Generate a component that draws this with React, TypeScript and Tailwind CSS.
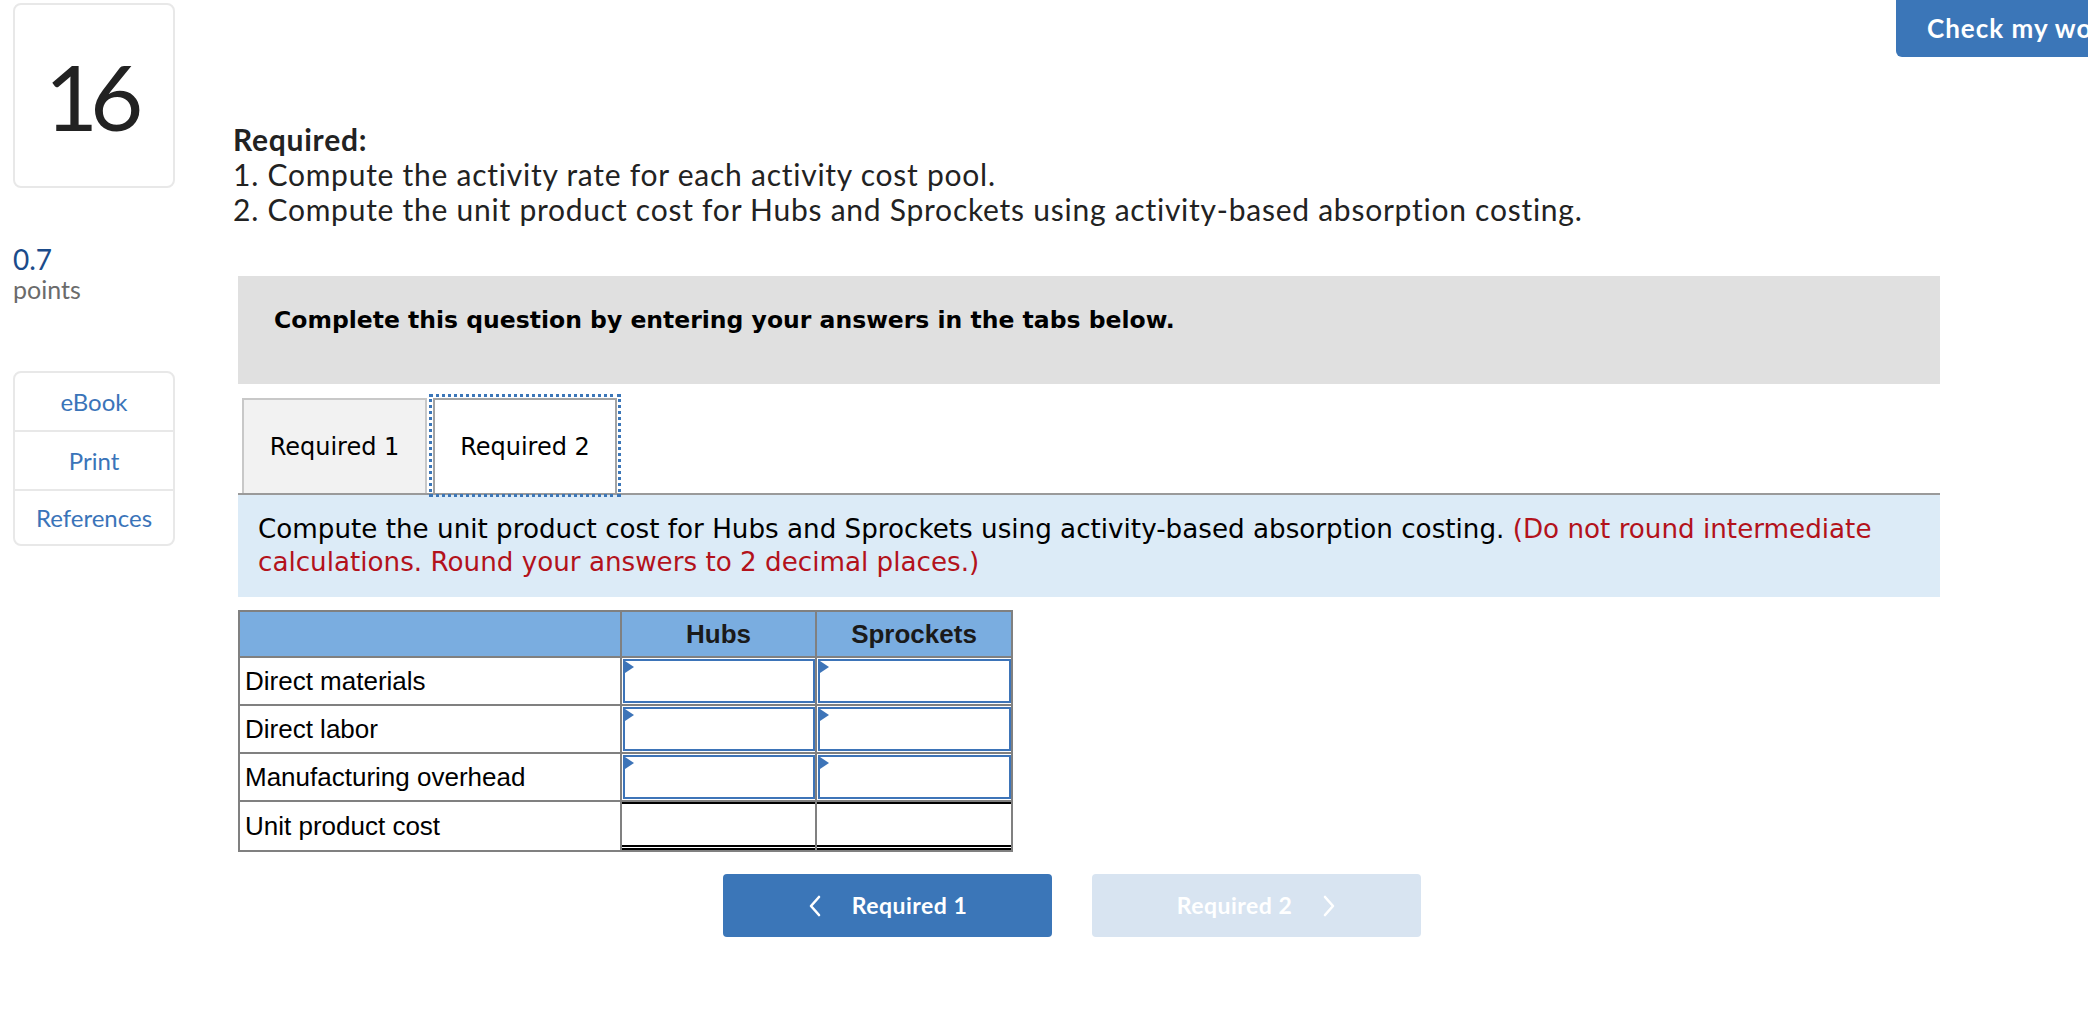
import React from "react";

const proxima = "font-['Lato',_'Liberation_Sans',_sans-serif]";
const verdana = "font-['DejaVu_Sans',_'Liberation_Sans',_sans-serif]";
const arial = "font-['Liberation_Sans',_Arial,_sans-serif]";

function Chevron({ dir }: { dir: "left" | "right" }) {
  return (
    <svg width="14" height="24" viewBox="0 0 14 24" fill="none">
      <polyline
        points={dir === "left" ? "11,3 3,12 11,21" : "3,3 11,12 3,21"}
        stroke="white"
        strokeWidth="2.6"
        strokeLinecap="round"
        strokeLinejoin="round"
      />
    </svg>
  );
}

function InputCell() {
  return (
    <div className="bg-white p-[1px] pr-0">
      <div className="relative h-full border-2 border-[#3d74b8] bg-white">
        <span className="absolute left-0 top-0 h-0 w-0 border-y-[6px] border-l-[9px] border-y-transparent border-l-[#3d74b8]" />
      </div>
    </div>
  );
}

const rows = ["Direct materials", "Direct labor", "Manufacturing overhead"];

export default function App() {
  return (
    <div className="relative h-[1018px] w-[2088px] overflow-hidden bg-white text-black">
      {/* check my work, cut off at the right edge */}
      <button
        className={`${proxima} absolute right-[-80px] top-0 h-[57px] w-[272px] rounded-b-[6px] bg-[#3b76b8] pl-[31px] text-left text-[26px] font-bold tracking-[1px] text-white`}
      >
        Check my work
      </button>

      <div className="flex">
        {/* sidebar */}
        <div className={`${proxima} ml-[13px] w-[162px] flex-none`}>
          <div className="mt-[3px] flex h-[185px] items-center justify-center rounded-[8px] border-2 border-[#e8e8e8] text-[92px] leading-none tracking-[-8px] text-[#222]">
            <span className="mr-[8px]">16</span>
          </div>
          <div className="mt-[56px] text-[28px] leading-[30px] text-[#1b4b8a]">0.7</div>
          <div className="text-[25px] leading-[30px] text-[#6b6b6b]">points</div>
          <div className="mt-[67px] rounded-[8px] border-2 border-[#e8e8e8] text-center text-[24px] text-[#3a74b9]">
            <div className="flex h-[57px] items-center justify-center">eBook</div>
            <div className="flex h-[59px] items-center justify-center border-t-2 border-[#e8e8e8]">Print</div>
            <div className="flex h-[55px] items-center justify-center border-t-2 border-[#e8e8e8]">References</div>
          </div>
        </div>

        {/* main column */}
        <div className="ml-[58px] w-[1707px] flex-none pt-[122px]">
          <div className={`${proxima} text-[30px] leading-[35px] tracking-[0.75px] text-[#222]`}>
            <div className="font-bold">Required:</div>
            <div>1. Compute the activity rate for each activity cost pool.</div>
            <div>2. Compute the unit product cost for Hubs and Sprockets using activity-based absorption costing.</div>
          </div>

          <div className="ml-[5px] mt-[49px] h-[108px] w-[1702px] bg-[#e0e0e0] pl-[36px] pt-[31px]">
            <div className={`${verdana} text-[23.5px] font-bold leading-[27px]`}>
              Complete this question by entering your answers in the tabs below.
            </div>
          </div>

          {/* tabs */}
          <div className={`${verdana} ml-[5px] mt-[14px] flex w-[1702px] items-end border-b-2 border-[#9a9a9a] text-[24px]`}>
            <div className="ml-[4px] flex h-[95px] w-[185px] items-center justify-center border-2 border-b-0 border-[#c8c8c8] bg-[#f2f2f2]">
              Required 1
            </div>
            <div className="ml-[6px] flex h-[95px] w-[184px] items-center justify-center border-2 border-b-0 border-[#a3a3a3] bg-white outline-3 outline-offset-1 outline-dotted outline-[#3b76b8]">
              Required 2
            </div>
          </div>

          <div className={`${verdana} ml-[5px] h-[102px] w-[1702px] bg-[#dcebf7] pl-[20px] pt-[18px] text-[26.2px] leading-[33px]`}>
            Compute the unit product cost for Hubs and Sprockets using activity-based absorption costing.{" "}
            <span className="text-[#b3121b]">
              (Do not round intermediate calculations. Round your answers to 2 decimal places.)
            </span>
          </div>

          {/* table */}
          <div
            className={`${arial} ml-[5px] mt-[13px] grid w-[775px] grid-cols-[380px_193px_194px] grid-rows-[44px_46px_46px_46px_48px] gap-[2px] bg-[#808080] p-[2px] text-[26px]`}
          >
            <div className="bg-[#7aade0]" />
            <div className="flex items-center justify-center bg-[#7aade0] font-bold text-[#1a1a1a]">Hubs</div>
            <div className="flex items-center justify-center bg-[#7aade0] font-bold text-[#1a1a1a]">Sprockets</div>
            {rows.map((r) => (
              <React.Fragment key={r}>
                <div className="flex items-center bg-white pl-[5px]">{r}</div>
                <InputCell />
                <InputCell />
              </React.Fragment>
            ))}
            <div className="flex items-center bg-white pl-[5px]">Unit product cost</div>
            <div className="border-b-[5px] border-t-2 border-double border-black bg-white [border-top-style:solid]" />
            <div className="border-b-[5px] border-t-2 border-double border-black bg-white [border-top-style:solid]" />
          </div>

          {/* nav buttons */}
          <div className={`${proxima} ml-[490px] mt-[22px] flex gap-[40px] text-[23px] font-bold tracking-[0.5px] text-white`}>
            <button className="flex h-[63px] w-[329px] items-center justify-center gap-[30px] rounded-[4px] bg-[#3b76b8]">
              <Chevron dir="left" />
              <span>Required 1</span>
            </button>
            <button className="flex h-[63px] w-[329px] items-center justify-center gap-[30px] rounded-[4px] bg-[#d8e4f1]">
              <span>Required 2</span>
              <Chevron dir="right" />
            </button>
          </div>
        </div>
      </div>
    </div>
  );
}
